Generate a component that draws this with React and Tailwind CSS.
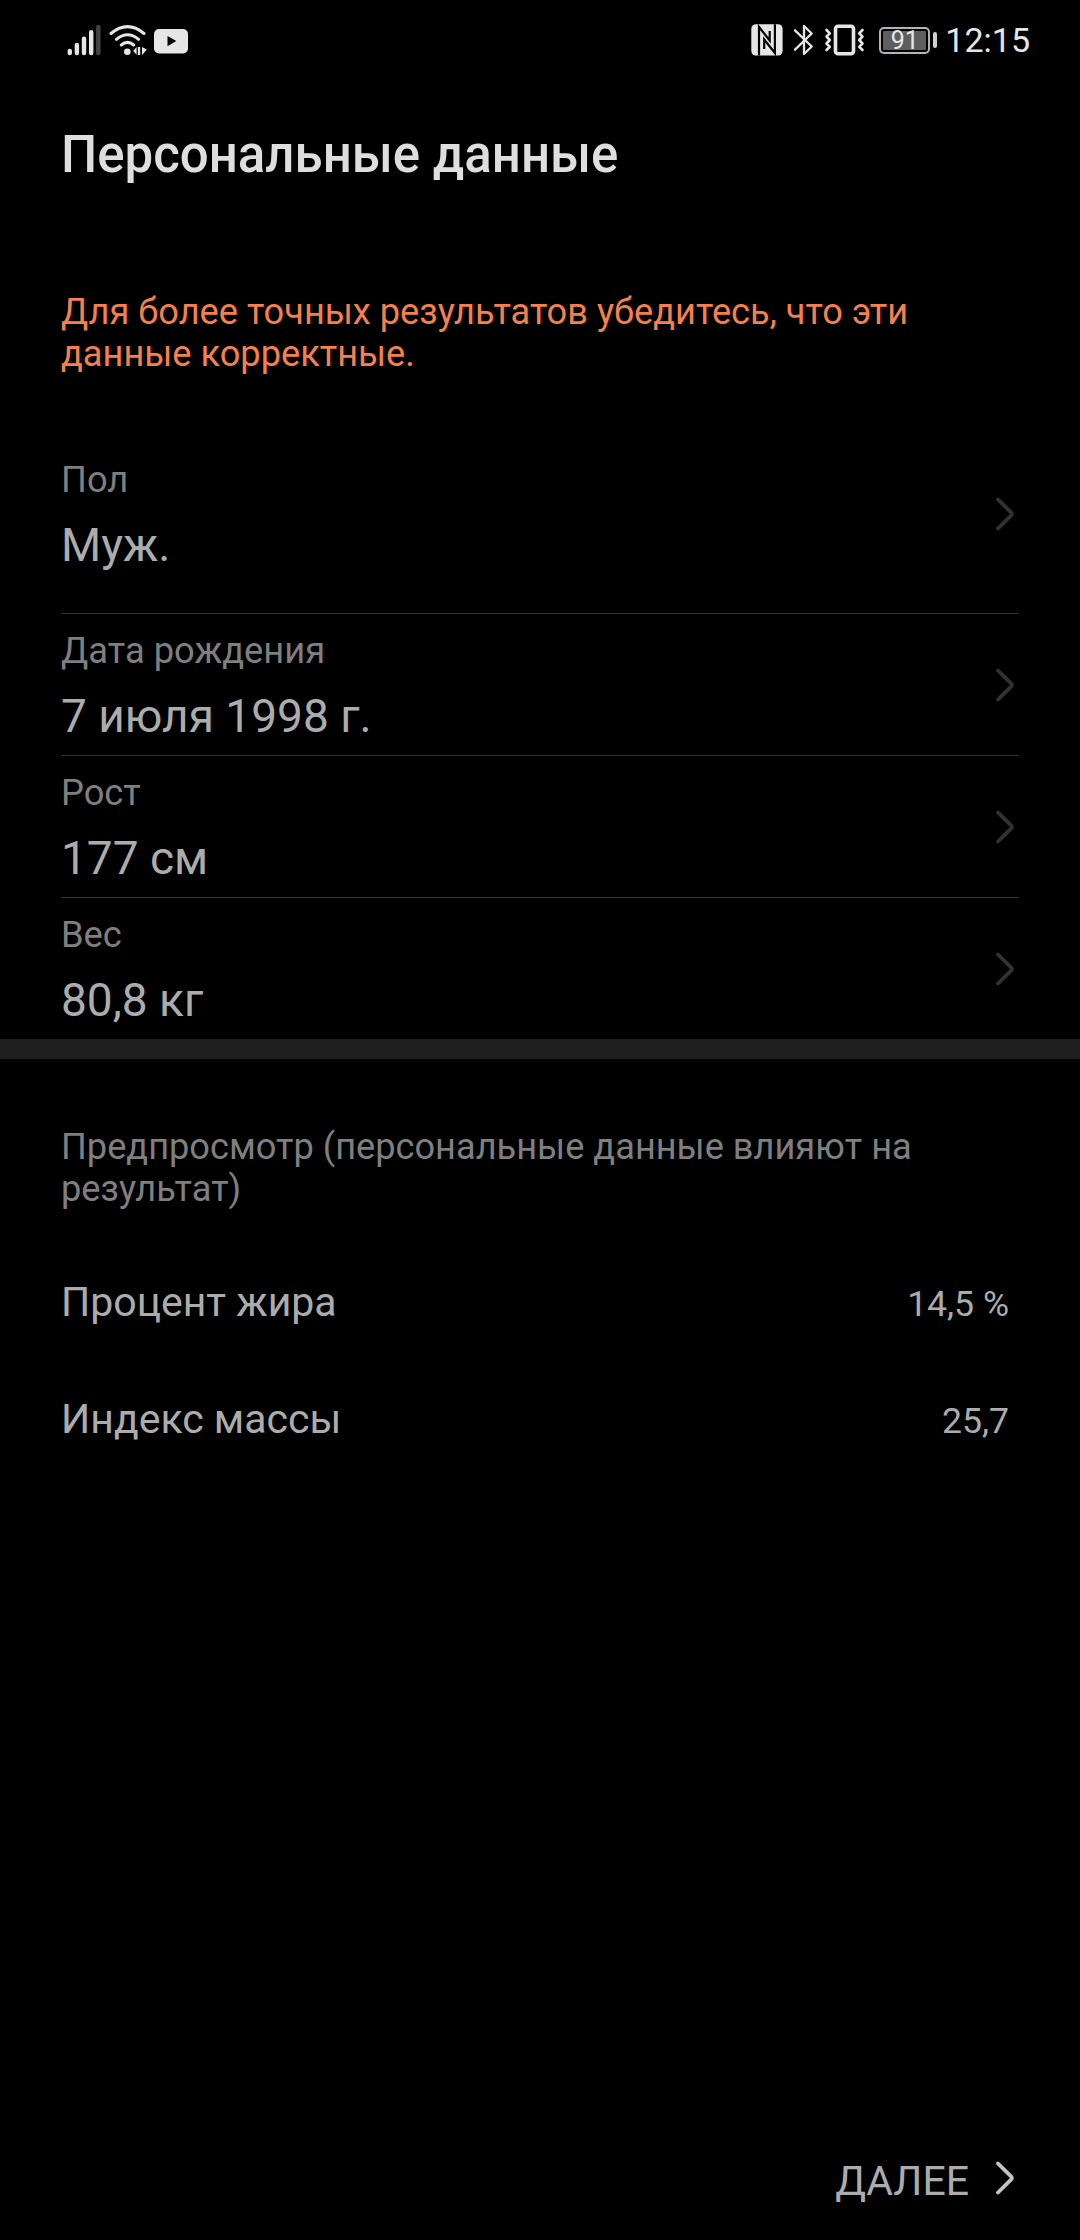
import React from 'react';

const profile = [
  { label: 'Пол', value: 'Муж.' },
  { label: 'Дата рождения', value: '7 июля 1998 г.' },
  { label: 'Рост', value: '177 см' },
  { label: 'Вес', value: '80,8 кг' },
];

const preview = [
  { label: 'Процент жира', value: '14,5 %' },
  { label: 'Индекс массы', value: '25,7' },
];

const Chevron = ({ className }) => (
  <svg className={className} width="20" height="36" viewBox="0 0 20 36" fill="none" stroke="currentColor" strokeWidth="3.8" strokeLinecap="round" strokeLinejoin="round">
    <path d="M3 3.5 16 16.3Q17.6 18 16 19.7L3 32.5" />
  </svg>
);

const StatusBar = () => (
  <div className="flex h-20 items-center justify-between pl-[66px] pr-[50px] text-[#e6e6e6]">
    <svg width="124" height="40" viewBox="66 20 124 40" fill="none" stroke="currentColor" strokeLinecap="round">
      {/* signal */}
      <g strokeWidth="4.4">
        <path d="M69.8 51V53M76.9 45V53M84 38.6V53M91.2 32.2V53" />
        <path d="M98.3 27V53" stroke="#444" />
      </g>
      {/* wifi */}
      <g strokeWidth="3">
        <path d="M111 33.5Q127.5 19.7 144 33.5M116.5 39.3Q127.5 30.3 138.5 39.3M121.3 45Q127.5 39.8 133.7 45" />
      </g>
      <g fill="currentColor" stroke="none">
        <circle cx="127.3" cy="51.7" r="3.3" />
        <path d="M133.2 51 136.6 47V54.8ZM137.8 47H140.2V55H137.8ZM142 47L142 55.3 146.8 49.5Z" />
      </g>
      {/* video app notification */}
      <rect x="154" y="29" width="34" height="24.5" rx="5" fill="currentColor" stroke="none" />
      <path d="M167.5 36V46.2L176.3 41.1Z" fill="#000" stroke="none" />
    </svg>

    <div className="flex items-center">
      <svg className="mr-[14px]" width="115" height="40" viewBox="750 20 115 40" fill="none" stroke="currentColor" strokeLinecap="round" strokeLinejoin="round">
        {/* nfc */}
        <rect x="751.3" y="24.3" width="31.3" height="31.3" rx="4.5" fill="currentColor" stroke="none" />
        <path d="M759 55.6V27L769.7 40.5V31M774.9 24.3V53L764.2 39.500V49" stroke="#000" strokeWidth="2.2" strokeLinecap="butt" strokeLinejoin="miter" />
        {/* bluetooth */}
        <path d="M795 30.3 811.7 46.5 804 54V26L811.7 33.5 795 49.7" strokeWidth="2.3" />
        {/* vibrate */}
        <rect x="835.5" y="26.3" width="18" height="27.5" rx="2.5" strokeWidth="3.6" />
        <path d="M826.5 30 829.8 33.3 826.5 36.7 829.8 40 826.5 43.5 829.8 46.8 826.5 50M862.5 30 859.2 33.3 862.5 36.7 859.2 40 862.5 43.5 859.2 46.8 862.5 50" strokeWidth="2.6" />
      </svg>
      <div className="flex h-[27px] w-[51px] rounded-[5px] border-2 border-[#b4b4b4] p-[2px]">
        <div className="flex flex-1 items-center justify-center rounded-[1px] bg-[#5e5e5e] text-[25px] leading-none">91</div>
      </div>
      <div className="ml-[3px] h-4 w-1 rounded-sm bg-[#cfcfcf]" />
      <div className="ml-2 text-[34px] leading-10">12:15</div>
    </div>
  </div>
);

const ProfileRow = ({ label, value }) => (
  <div className="flex h-[141px] items-center justify-between pr-1">
    <div>
      <div className="text-[36.3px] leading-[42px] text-[#7f7f7f]">{label}</div>
      <div className="mt-[17px] mb-[-4px] text-[46px] leading-[54px] text-[#acacac]">{value}</div>
    </div>
    <Chevron className="text-[#323232]" />
  </div>
);

const App = () => {
  return (
    <div className="flex h-[2240px] w-[1080px] flex-col bg-black font-['Roboto',sans-serif]">
      <StatusBar />

      <h1 className="mt-[45px] px-[61px] text-[51px] font-medium leading-[60px] text-[#dedede]">
        Персональные данные
      </h1>
      <p className="mt-[106px] px-[61px] text-[36.2px] leading-[42px] text-[#f5804c]">
        Для более точных результатов убедитесь, что эти данные корректные.
      </p>

      <div className="mt-[68px] px-[61px]">
        {profile.map((item, i) => (
          <div key={item.label} className={i < profile.length - 1 ? 'border-b border-[#333]' : ''}>
            <ProfileRow {...item} />
            {i === 0 && <div className="h-[29px]" />}
          </div>
        ))}
      </div>

      <div className="h-5 shrink-0 bg-[#1e1e1e]" />

      <p className="mt-[67px] px-[61px] text-[36.2px] leading-[42px] text-[#7f7f7f]">
        Предпросмотр (персональные данные влияют на результат)
      </p>
      <div className="mt-[34px] pl-[61px] pr-[71px] text-[#acacac]">
        {preview.map((item) => (
          <div key={item.label} className="flex h-[117px] items-baseline justify-between pt-[33px]">
            <span className="text-[41px] leading-[50px]">{item.label}</span>
            <span className="text-[35.6px] leading-[42px]">{item.value}</span>
          </div>
        ))}
      </div>

      <button className="mt-auto mb-[34px] mr-[65px] flex items-center self-end">
        <span className="mr-[26px] text-[41px] leading-[50px] text-[#acacac]">ДАЛЕЕ</span>
        <Chevron className="mb-1.5 text-[#c4c4c4]" />
      </button>
    </div>
  );
};

export default App;
